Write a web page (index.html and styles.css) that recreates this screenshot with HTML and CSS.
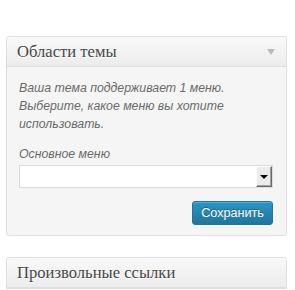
FILE: index.html
```html
<!DOCTYPE html>
<html lang="ru">
<head>
<meta charset="utf-8">
<link rel="stylesheet" href="styles.css">
</head>
<body>
<div class="page">
  <section class="box">
    <div class="box-head">
      <h3 class="box-title">Области темы</h3>
      <span class="toggle"></span>
    </div>
    <div class="box-body">
      <p class="desc">Ваша тема поддерживает 1 меню. Выберите, какое меню вы хотите использовать.</p>
      <label class="field-label">Основное меню</label>
      <div class="select">
        <span class="select-value"></span>
        <span class="select-btn"><span class="select-arrow"></span></span>
      </div>
      <div class="actions">
        <button class="btn-primary">Сохранить</button>
      </div>
    </div>
  </section>
  <section class="box box-second">
    <div class="box-head">
      <h3 class="box-title">Произвольные ссылки</h3>
    </div>
  </section>
</div>
</body>
</html>
```
FILE: styles.css
```css
html, body {
  margin: 0;
  padding: 0;
  background: #fff;
}
.page {
  padding: 36px 8px 0 6px;
  width: 281px;
}
.box {
  border: 1px solid #dfdfdf;
  border-radius: 3px;
  background: #f5f5f5;
  box-shadow: inset 0 1px 0 #fff;
}
.box-second {
  margin-top: 21px;
  border-bottom-left-radius: 0;
  border-bottom-right-radius: 0;
}
.box-head {
  height: 29px;
  display: flex;
  align-items: center;
  justify-content: space-between;
  padding: 0 10px 0 10px;
  background: linear-gradient(to bottom, #f9f9f9, #ececec);
  border-bottom: 1px solid #dfdfdf;
  border-radius: 3px 3px 0 0;
}
.box-title {
  margin: 0;
  font-family: "Liberation Serif", "DejaVu Serif", serif;
  font-weight: normal;
  font-size: 16.6px;
  color: #464646;
  text-shadow: 0 1px 0 #fff;
}
.toggle {
  width: 0;
  height: 0;
  border-left: 4px solid transparent;
  border-right: 4px solid transparent;
  border-top: 6px solid #bbb;
  margin-right: 1px;
}
.box-body {
  padding: 12px 13px 10px 12px;
  font-family: "Liberation Sans", Arial, sans-serif;
  font-size: 12.3px;
}
.desc {
  margin: 0;
  padding-left: 0;
  font-style: italic;
  color: #6a6a6a;
  line-height: 18px;
}
.field-label {
  display: block;
  margin-top: 12px;
  font-style: italic;
  color: #6a6a6a;
  line-height: 18px;
}
.select {
  margin-top: 2px;
  height: 21px;
  display: flex;
  border: 1px solid #dcdcdc;
  background: #fff;
}
.select-value {
  flex: 1;
}
.select-btn {
  width: 14px;
  display: flex;
  align-items: center;
  justify-content: center;
  background: #ececec;
  border-top: 1px solid #fff;
  border-left: 1px solid #fff;
  border-right: 1px solid #6b6b6b;
  border-bottom: 1px solid #6b6b6b;
  box-shadow: inset -1px -1px 0 #a0a0a0;
}
.select-arrow {
  width: 0;
  height: 0;
  border-left: 4px solid transparent;
  border-right: 4px solid transparent;
  border-top: 4px solid #000;
  margin-top: 1px;
}
.actions {
  display: flex;
  justify-content: flex-end;
  margin-top: 13px;
}
.btn-primary {
  height: 24px;
  width: 81px;
  padding: 0;
  border: 1px solid #21759b;
  border-radius: 3px;
  background: linear-gradient(to bottom, #2a95c5, #21759b);
  color: #fff;
  font-family: "Liberation Sans", Arial, sans-serif;
  font-size: 12.6px;
  text-shadow: 0 -1px 0 rgba(0,0,0,0.3);
  box-shadow: inset 0 1px 0 rgba(120,200,230,0.5);
}
```
